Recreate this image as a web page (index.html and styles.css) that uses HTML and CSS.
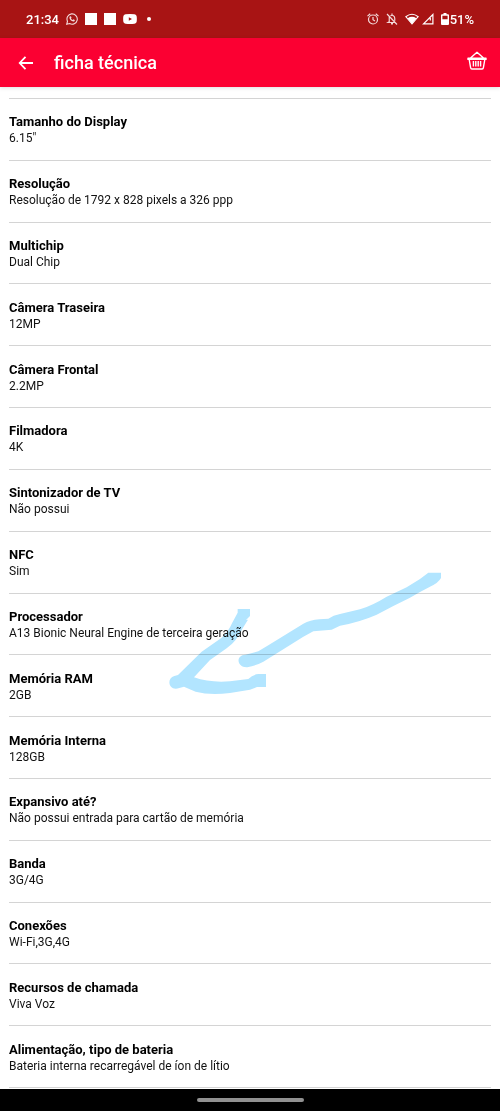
FILE: index.html
```html
<!DOCTYPE html>
<html lang="pt-BR">
<head>
<meta charset="utf-8">
<meta name="viewport" content="width=device-width, initial-scale=1">
<title>ficha técnica</title>
<link rel="stylesheet" href="styles.css">
</head>
<body>
<div class="status">
  <div class="status-left">
    <span>21:34</span>
    <svg class="whatsapp" width="12" height="12" viewBox="0 0 24 24" aria-hidden="true"><path d="M1.500 22.500l1.500-6A10.300 10.300 0 1 1 7.200 21z" fill="none" stroke="currentColor" stroke-width="2.200"/><path d="M8.500 6.500l1.600.3.900 2.600-1 1.400c.9 1.600 2 2.500 3.600 3.200l1.300-1.400 2.700 1.300c.2 2-1.400 3.200-3 3.200-4-.5-7.400-4-7.800-7.500 0-1.400.7-2.500 1.700-3.100z" fill="currentColor"/></svg>
    <i class="square"></i>
    <i class="square"></i>
    <svg class="video" width="14" height="10" viewBox="0 0 14 10" aria-hidden="true"><path fill-rule="evenodd" fill="currentColor" d="M2.500.2Q7-.2 11.500.2 13.500.4 13.700 2.500 14 5 13.700 7.500 13.500 9.600 11.500 9.800 7 10.200 2.500 9.800.5 9.600.3 7.500 0 5 .3 2.500.5.400 2.500.2zM5.800 3.200v3.600L9 5z"/></svg>
    <i class="dot"></i>
  </div>
  <div class="status-right">
    <svg class="alarm" width="12" height="12" viewBox="0 0 24 24" fill="none" stroke="currentColor" stroke-width="2.400" aria-hidden="true"><circle cx="12" cy="13" r="9"/><path d="M12 8v5.500l4 2.300M1 6.200l5.500-4.700M23 6.200l-5.500-4.700"/></svg>
    <svg class="bell" width="12" height="12" viewBox="0 0 24 24" fill="none" stroke="currentColor" stroke-width="2.400" aria-hidden="true"><path d="M2 2l20 21M6.500 8v9.500L4 19h14M9 5.500c4-2.500 8.500.3 8.500 5v5M12 4.500V1"/><path d="M10 21.500h4" stroke-width="3"/></svg>
    <svg class="wifi" width="14" height="12" viewBox="0 0 14 12" aria-hidden="true"><path d="M.8 3.700Q7-1.200 13.200 3.700L7 11z" fill="none" stroke="currentColor" stroke-width="1.100"/><path d="M2.600 5.200Q7 2.300 11.400 5.200L7 11z" fill="currentColor"/></svg>
    <svg class="signal" width="12" height="12" viewBox="0 0 12 12" fill="none" stroke="currentColor" stroke-width="1.200" aria-hidden="true"><path d="M1.500 10.900L10.900 1.500v9.400zM8.300 5v2.500"/></svg>
    <svg class="battery" width="8" height="12" viewBox="0 0 8 12" aria-hidden="true"><path fill="currentColor" fill-rule="evenodd" d="M2.500 0h3v1.300H7q1 0 1 1V11q0 1-1 1H1q-1 0-1-1V2.300q0-1 1-1h1.500zM1.400 2.800v3.400h5.200V2.800z"/></svg>
    <span>51%</span>
  </div>
</div>
<header class="bar">
  <button class="icon-button" aria-label="Voltar"><svg width="16" height="14" viewBox="0 0 16 14" fill="none" stroke="currentColor" stroke-width="1.800" aria-hidden="true"><path d="M7.500.8L1.700 7l5.800 6.200M1.700 7H15"/></svg></button>
  <h1 class="title">ficha técnica</h1>
  <button class="icon-button basket" aria-label="Cesta"><svg width="20" height="19" viewBox="0 0 20 19" fill="none" stroke="currentColor" stroke-width="1.400" stroke-linejoin="round" aria-hidden="true"><path d="M1 7.200h18v1.200H1zM2.200 8.500l1.400 8.200q.2 1.300 1.300 1.300h10.200q1.100 0 1.300-1.300l1.400-8.200M3.500 7L10 1.200 16.500 7M6.400 10v5.500M8.800 10v5.500M11.200 10v5.500M13.600 10v5.500"/></svg></button>
</header>
<main class="content">
  <dl class="specs">
    <div class="spec"><dt>Tamanho do Display</dt><dd>6.15"</dd></div>
    <div class="spec"><dt>Resolução</dt><dd>Resolução de 1792 x 828 pixels a 326 ppp</dd></div>
    <div class="spec"><dt>Multichip</dt><dd>Dual Chip</dd></div>
    <div class="spec"><dt>Câmera Traseira</dt><dd>12MP</dd></div>
    <div class="spec"><dt>Câmera Frontal</dt><dd>2.2MP</dd></div>
    <div class="spec"><dt>Filmadora</dt><dd>4K</dd></div>
    <div class="spec"><dt>Sintonizador de TV</dt><dd>Não possui</dd></div>
    <div class="spec"><dt>NFC</dt><dd>Sim</dd></div>
    <div class="spec"><dt>Processador</dt><dd>A13 Bionic Neural Engine de terceira geração</dd></div>
    <div class="spec"><dt>Memória RAM</dt><dd>2GB</dd></div>
    <div class="spec"><dt>Memória Interna</dt><dd>128GB</dd></div>
    <div class="spec"><dt>Expansivo até?</dt><dd>Não possui entrada para cartão de memória</dd></div>
    <div class="spec"><dt>Banda</dt><dd>3G/4G</dd></div>
    <div class="spec"><dt>Conexões</dt><dd>Wi-Fi,3G,4G</dd></div>
    <div class="spec"><dt>Recursos de chamada</dt><dd>Viva Voz</dd></div>
    <div class="spec"><dt>Alimentação, tipo de bateria</dt><dd>Bateria interna recarregável de íon de lítio</dd></div>
  </dl>
  <svg class="marker" width="300" height="140" viewBox="0 0 900 420" aria-hidden="true">
    <path fill="#b2e5ff" d="M805 38H843V54Q835 69 810 80Q780 95 750 113L700 138L650 164Q600 186 540 197L515 209L460 214L430 230L310 305Q290 316 262 322C230 324 226 285 256 284L295 274L325 256L430 191Q450 180 478 178L505 176Q520 165 540 162L600 148Q640 135 680 110L740 82L780 57Z"/>
    <path fill="#b2e5ff" d="M233 147H270V168L258 180L264 179L248 205Q230 245 200 265L150 300L102 352Q150 369 210 364L265 357Q278 343 296 342H318V381H291L270 389L210 399Q150 407 107 395L72 380L58 384C27 396 17 355 43 348L54 345L125 275L185 233Q206 214 216 190L233 158Z"/>
  </svg>
</main>
<footer class="nav"><i class="handle"></i></footer>
</body>
</html>
```
FILE: styles.css
```css
* { box-sizing: border-box; }

body {
  margin: 0;
  min-height: 100vh;
  display: flex;
  flex-direction: column;
  background: #fff;
  color: #111;
  font-family: Roboto, "Liberation Sans", sans-serif;
  font-size: 13px;
}

svg { display: block; flex: none; }

.status {
  height: 38px;
  padding: 0 26px;
  display: flex;
  align-items: center;
  justify-content: space-between;
  background: #a81414;
  color: #fff;
  font-weight: 500;
}

.status-left, .status-right { display: flex; align-items: center; gap: 7px; }
.alarm, .bell, .whatsapp { color: #f3dada; }
.square { width: 12px; height: 12px; background: #fff; }
.dot { width: 4px; height: 4px; margin-left: 3px; border-radius: 50%; background: #fff; }
.signal { margin-left: -4px; }
.battery { margin-right: -6px; }

.bar {
  height: 49px;
  padding: 0 9px 0 12px;
  display: flex;
  align-items: center;
  background: #fb0032;
  color: #fff;
  box-shadow: 0 1px 4px #0002;
}

.icon-button {
  width: 28px;
  height: 40px;
  padding: 0;
  display: flex;
  align-items: center;
  justify-content: center;
  border: 0;
  background: none;
  color: inherit;
}

.basket { padding-bottom: 4px; }

.title {
  flex: 1;
  margin: 0;
  padding-left: 14px;
  font-size: 18px;
  font-weight: 500;
  line-height: 24px;
}

.content {
  position: relative;
  flex: 1;
  display: flex;
  padding: 11px 9px 1px;
}

.specs {
  flex: 1;
  margin: 0;
  display: grid;
  grid-auto-rows: 1fr;
  border-bottom: 1px solid #d4d4d4;
}

.spec {
  padding-top: 2px;
  display: flex;
  flex-direction: column;
  justify-content: center;
  border-top: 1px solid #d4d4d4;
  line-height: 17px;
}

dt { color: #000; font-weight: 700; }
dd { margin: 0; font-size: 12px; }

.marker {
  position: absolute;
  left: 160px;
  top: 473px;
  mix-blend-mode: multiply;
  pointer-events: none;
}

.nav {
  height: 22px;
  display: flex;
  align-items: center;
  justify-content: center;
  background: #000;
}

.handle { width: 107px; height: 4px; border-radius: 2px; background: #919191; }
```
